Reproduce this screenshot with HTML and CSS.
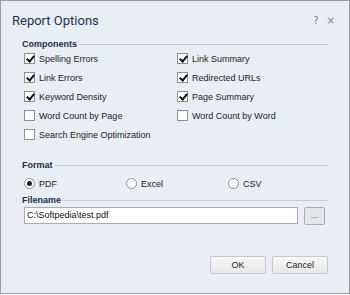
FILE: index.html
```html
<!DOCTYPE html>
<html lang="en">
<head>
    <meta charset="UTF-8">
    <title>Report Options</title>
    <link rel="stylesheet" href="styles.css">
</head>
<body>
    <div class="dialog">
        <div class="head">
            <div class="title">Report Options</div>
            <div class="ctrls"><span>?</span><span>&#215;</span></div>
        </div>

        <div class="section">
            <div class="sec-title">Components</div>
        </div>
        <div class="checks">
            <label class="row"><span class="box on"></span>Spelling Errors</label>
            <label class="row"><span class="box on"></span>Link Summary</label>
            <label class="row"><span class="box on"></span>Link Errors</label>
            <label class="row"><span class="box on"></span>Redirected URLs</label>
            <label class="row"><span class="box on"></span>Keyword Density</label>
            <label class="row"><span class="box on"></span>Page Summary</label>
            <label class="row"><span class="box"></span>Word Count by Page</label>
            <label class="row"><span class="box"></span>Word Count by Word</label>
            <label class="row"><span class="box"></span>Search Engine Optimization</label>
        </div>

        <div class="section fmt">
            <div class="sec-title">Format</div>
        </div>
        <div class="radios">
            <label class="row"><span class="radio on"></span>PDF</label>
            <label class="row"><span class="radio"></span>Excel</label>
            <label class="row"><span class="radio"></span>CSV</label>
        </div>

        <div class="section fn">
            <div class="sec-title">Filename</div>
        </div>
        <div class="file">
            <div class="input">C:\Softpedia\test.pdf</div>
            <div class="browse">...</div>
        </div>

        <div class="buttons">
            <div class="btn">OK</div>
            <div class="btn">Cancel</div>
        </div>
    </div>
</body>
</html>
```

FILE: styles.css
```css
*{
    margin: 0px;
    padding: 0px;
    box-sizing: border-box;
}
body{
    width: 350px;
    height: 295px;
    background-color: white;
    font-family: "Liberation Sans", Arial, sans-serif;
    font-size: 9px;
    color: #222;
}
.dialog{
    width: 350px;
    height: 294px;
    border: 1px solid #9c9c9c;
    background-color: #e9eef4;
}
.head{
    display: flex;
    justify-content: space-between;
    align-items: center;
    height: 38px;
    padding-left: 11px;
    padding-right: 14px;
}
.title{
    font-family: Roboto, sans-serif;
    font-size: 13px;
    color: #1e3150;
}
.ctrls{
    display: flex;
    gap: 8px;
    color: #7a8290;
    font-family: "DejaVu Sans", sans-serif;
    font-size: 10px;
}
.section{
    padding: 0 21px 0 21px;
    display: flex;
    align-items: center;
    height: 10px;
}
.section::after{
    content: "";
    flex: 1;
    border-top: 1px solid #c3cad3;
    margin-left: 2px;
}
.sec-title{
    font-weight: bold;
    color: #1b2d4d;
}
.checks{
    display: grid;
    grid-template-columns: 153px 153px;
    padding: 0 0 0 23px;
}
.row{
    display: flex;
    align-items: center;
    height: 19px;
}
.box{
    width: 11px;
    height: 11px;
    border: 1px solid #8d8f93;
    background-color: white;
    margin-right: 4px;
    position: relative;
}
.box.on::after{
    content: "";
    position: absolute;
    left: 3px;
    top: 0px;
    width: 3px;
    height: 6px;
    border-right: 2px solid #111;
    border-bottom: 2px solid #111;
    transform: rotate(40deg);
}
.fmt{
    margin-top: 16px;
}
.radios{
    display: grid;
    grid-template-columns: 102px 102px 102px;
    padding: 4px 0 0 23px;
}
.radio{
    width: 11px;
    height: 11px;
    border: 1px solid #8d8f93;
    border-radius: 50%;
    background-color: white;
    margin-right: 4px;
    display: flex;
    align-items: center;
    justify-content: center;
}
.radio.on::after{
    content: "";
    width: 5px;
    height: 5px;
    border-radius: 50%;
    background-color: #222;
}
.fn{
    margin-top: 2px;
}
.file{
    display: flex;
    align-items: flex-start;
    padding: 2px 0 0 23px;
    gap: 6px;
}
.input{
    width: 274px;
    height: 17px;
    border: 1px solid #a9adb3;
    background-color: white;
    padding-left: 2px;
    line-height: 15px;
    color: #111;
}
.browse{
    width: 21px;
    height: 18px;
    border: 1px solid #a9adb3;
    border-radius: 2px;
    background-color: #e3e6ea;
    text-align: center;
    line-height: 14px;
    color: #555;
}
.buttons{
    display: flex;
    justify-content: flex-end;
    gap: 6px;
    padding: 31px 21px 0 0;
}
.btn{
    width: 56px;
    height: 18px;
    border: 1px solid #c5c9ce;
    border-radius: 2px;
    background: linear-gradient(#f7f7f7, #e8e8e8);
    text-align: center;
    line-height: 16px;
    color: #222;
}
```
